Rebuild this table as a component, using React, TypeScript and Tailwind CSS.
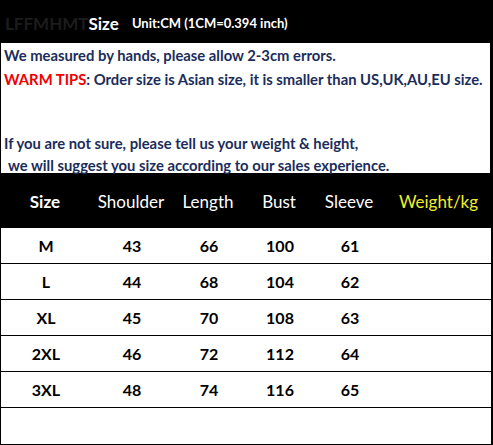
const rows = [
  ["M", "43", "66", "100", "61"],
  ["L", "44", "68", "104", "62"],
  ["XL", "45", "70", "108", "63"],
  ["2XL", "46", "72", "112", "64"],
  ["3XL", "48", "74", "116", "65"],
  ["", "", "", "", ""],
];

const cols = "grid grid-cols-[90px_82px_72px_70px_70px_1fr] items-center";

export default function App() {
  return (
    <div className="w-[493px] h-[445px] bg-black overflow-hidden font-['Lato','Noto_Sans',sans-serif]">
      {/* title bar */}
      <div className="h-[43px] flex items-center pl-[5px] pt-[3px]">
        <span className="text-[#1c1c1c] text-[17px] font-bold leading-none">LFFMHMT</span>
        <span className="text-white text-[17px] font-bold leading-none">Size</span>
        <span className="text-white text-[13px] font-bold leading-none ml-[13px]">Unit:CM (1CM=0.394 inch)</span>
      </div>

      {/* notes */}
      <div className="h-[130px] flex flex-col ml-[1px] mr-[3px] bg-white text-[#1b2d5a] text-[14.8px] font-bold leading-none pl-[3px] pt-[2px]">
        <div className="h-[20px] flex items-center">We measured by hands, please allow 2-3cm errors.</div>
        <div className="mt-[4px] h-[20px] flex items-center">
          <span className="text-[#f00000]">WARM TIPS</span>: Order size is Asian size, it is smaller than US,UK,AU,EU size.
        </div>
        <div className="mt-[44px] h-[20px] flex items-center">If you are not sure, please tell us your weight &amp; height,</div>
        <div className="mt-[4px] h-[16px] flex items-center pl-[4px]">we will suggest you size according to our sales experience.</div>
      </div>

      {/* table head */}
      <div className={`${cols} h-[55px] text-[17px] text-white text-center pt-[3px]`}>
        <div className="font-bold">Size</div>
        <div>Shoulder</div>
        <div>Length</div>
        <div>Bust</div>
        <div>Sleeve</div>
        <div className="text-[#f0ee2c]">Weight/kg</div>
      </div>

      {/* table body */}
      <div className="bg-white ml-[1px] mr-[2px] border-b-2 border-black">
        {rows.map((r, i) => (
          <div
            key={i}
            className={`${cols} h-[36px] text-[16px] font-bold text-black text-center ${i < rows.length - 1 ? "border-b border-black" : ""}`}
          >
            {r.map((c, j) => (
              <div key={j}>{c}</div>
            ))}
            <div></div>
          </div>
        ))}
      </div>
    </div>
  );
}
